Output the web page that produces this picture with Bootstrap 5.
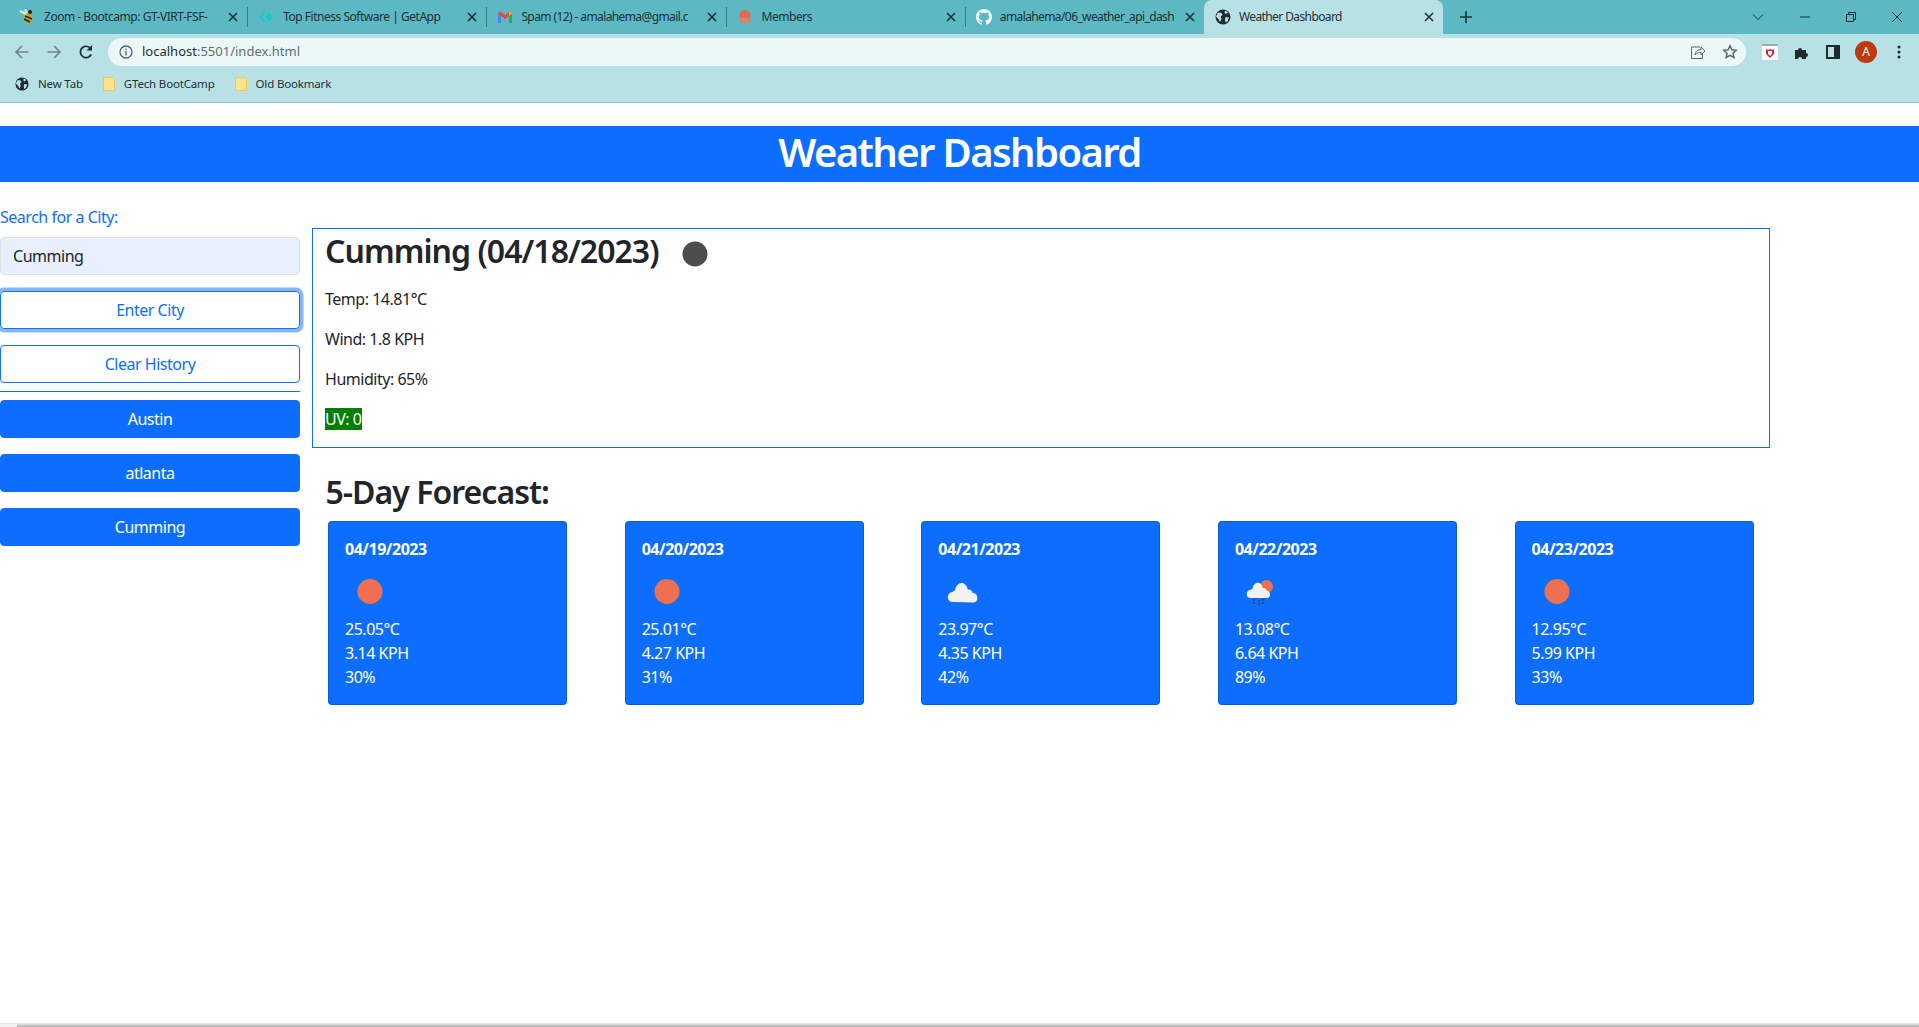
<!DOCTYPE html>
<html lang="en">
<head>
    <meta charset="UTF-8">
    <meta name="viewport" content="width=device-width, initial-scale=1.0">
    <title>Weather Dashboard</title>
    <link href="https://cdn.jsdelivr.net/npm/bootstrap@5.3.0/dist/css/bootstrap.min.css" rel="stylesheet">
    <script src="https://cdn.jsdelivr.net/npm/bootstrap@5.3.0/dist/js/bootstrap.bundle.min.js"></script>
    <style>
        html, body {
            height: 100%;
            overflow: hidden;
        }
        body {
            font-family: "Noto Sans", "Open Sans", sans-serif;
            color: #212529;
            letter-spacing: -.03em;
        }
        .btn, .form-control {
            letter-spacing: -.03em;
            border-radius: 4px;
        }
        /* browser window */
        .tab-strip {
            height: 34px;
            background-color: #5cb8c2;
            padding-left: 8px;
        }
        .tab-item {
            width: 239.2px;
            height: 34px;
            padding: 0 9px 0 11px;
            font-size: 12px;
            letter-spacing: -.04em;
            color: #1f3036;
            position: relative;
        }
        .tab-item + .tab-item::before {
            content: "";
            position: absolute;
            left: 0;
            top: 7px;
            height: 20px;
            border-left: 1px solid #3c7d85;
        }
        .tab-item.tab-on {
            background-color: #b8e1e6;
            border-radius: 8px 8px 0 0;
        }
        .tab-item.tab-on::before,
        .tab-on + .tab-item::before {
            display: none;
        }
        .tab-name {
            white-space: nowrap;
            overflow: hidden;
            flex: 1;
            margin-left: 9px;
        }
        .tab-tight {
            letter-spacing: -.05em;
            margin-left: 8px;
        }
        .tab-x {
            width: 10px;
            height: 10px;
            margin-left: 8px;
            flex: none;
        }
        .win-btns {
            margin-left: auto;
            gap: 36px;
            padding-right: 17px;
        }
        .tool-row {
            height: 32px;
            background-color: #b8e1e6;
            padding-top: 4px;
        }
        .nav-icons {
            width: 108px;
            height: 28px;
            padding-left: 14px;
            gap: 16px;
        }
        .url-bar {
            width: 1638px;
            height: 28px;
            background-color: #ecf7f8;
            border-radius: 14px;
            padding: 0 8px 0 11px;
            font-size: 13px;
            letter-spacing: 0;
            color: #5c6f73;
        }
        .url-bar b {
            font-weight: 400;
            color: #1f3036;
        }
        .url-text {
            margin-left: 9px;
        }
        .ext-icons {
            padding-left: 16px;
            gap: 16px;
        }
        .mark-row {
            height: 37px;
            background-color: #b8e1e6;
            border-bottom: 1px solid #9fbcc0;
            font-size: 11.5px;
            letter-spacing: -.015em;
            color: #1f3036;
            padding-left: 15px;
        }
        .mark-item {
            gap: 9px;
            margin-right: 20px;
        }
        .profile-dot {
            width: 22px;
            height: 22px;
            border-radius: 50%;
            background-color: #bf3a0d;
            color: #fff;
            font-size: 12px;
            line-height: 22px;
            text-align: center;
            letter-spacing: 0;
            margin: 0 4px 0 -1px;
        }
        /* page */
        .page-area {
            flex: 1;
            min-height: 0;
        }
        .dash-title {
            margin-top: 23px;
            font-size: 40px;
            font-weight: 600;
            line-height: 48px;
            letter-spacing: -.04em;
            padding: 2px 0 6px;
            margin-bottom: 0;
        }
        .side-col {
            width: 300px;
            padding-top: 23px;
            flex: none;
        }
        .city-label {
            margin-bottom: 8px;
            line-height: 24px;
        }
        .city-input, .city-input:focus {
            background-color: #e8f0fe;
        }
        .btn-ring {
            box-shadow: 0 0 0 3.5px #86b7fe;
        }
        .main-col {
            width: 1458px;
            margin-left: 12px;
            padding-top: 46px;
        }
        .today-box {
            border: 1px solid #0d6efd;
            padding: 0 12px;
            height: 220px;
        }
        .today-head {
            height: 50px;
            margin: 0 0 8px;
            padding-bottom: 6px;
            font-size: 32px;
            font-weight: 600;
            letter-spacing: -.03em;
        }
        .today-head svg {
            margin: 3px 0 0 11px;
        }
        .uv-chip {
            background-color: green;
            color: #fff;
        }
        .week-head {
            margin: 25px 0 10px 13.5px;
            font-size: 32px;
            font-weight: 600;
            line-height: 38px;
            letter-spacing: -.03em;
        }
        .week-row {
            padding: 0 16.4px 0 16px;
        }
        .day-card {
            --bs-card-border-radius: 4px;
            width: 239px;
            height: 184px;
        }
        .day-date {
            font-size: 16px;
            font-weight: 700;
            line-height: 19px;
            padding-top: 2px;
            margin-bottom: 7px;
        }
        .day-card svg {
            display: block;
            margin-bottom: 1px;
        }
        .scroll-strip {
            height: 4px;
            background-color: #f1f1f1;
            border-top: 1px solid #e4e4e4;
            flex: none;
        }
        .scroll-thumb {
            margin-left: 17px;
            height: 100%;
            background-color: #bdbdbd;
            border-top: 1px solid #dcdcdc;
        }
    </style>
</head>
<body class="d-flex flex-column">

    <svg width="0" height="0" class="d-none">
        <symbol id="ic-x" viewBox="0 0 10 10"><path d="M1 1l8 8M9 1l-8 8" stroke="#1f3036" stroke-width="1.6" fill="none"/></symbol>
        <symbol id="ic-globe" viewBox="0 0 16 16"><circle cx="8" cy="8" r="7.5" fill="#202b30"/><path d="M3 3.5l3.5.5 1 2-2 1.5 1 2.5-1.5 3-1.5-3-2.5-2.5zM10 1.5l3 2-2 1.5-1.5-1zM10.500 8l3.500.500-1.500 4-2 1-.500-3z" fill="#b8e1e6"/></symbol>
        <symbol id="ic-folder" viewBox="0 0 12 14"><path d="M.5.5h9l2 2v11H.5z" fill="#fde293" stroke="#f2c94c"/></symbol>
        <symbol id="ic-sun" viewBox="0 0 50 50"><ellipse cx="25" cy="25.500" rx="12.500" ry="12.500" fill="#ee7050"/></symbol>
    </svg>

    <div class="tab-strip d-flex flex-shrink-0">
        <div class="tab-item d-flex align-items-center">
            <svg width="16" height="16" viewBox="0 0 16 16"><ellipse cx="9" cy="9" rx="4" ry="6" fill="#c9a227" transform="rotate(-25 9 9)"/><path d="M6 7l7 3M5 10l6 3" stroke="#222" stroke-width="1.500"/><path d="M7 5L1 2M8 4L6 0" stroke="#e6edf0" stroke-width="2"/><circle cx="11" cy="3" r="2" fill="#222"/></svg>
            <span class="tab-name">Zoom - Bootcamp: GT-VIRT-FSF-</span>
            <svg class="tab-x"><use href="#ic-x"/></svg>
        </div>
        <div class="tab-item d-flex align-items-center">
            <svg width="16" height="16" viewBox="0 0 16 16"><path d="M1 8l4-5 3 0-4 5 4 5-3 0zM7 8l4-5 4 5-4 5z" fill="#22c5c9"/></svg>
            <span class="tab-name">Top Fitness Software | GetApp</span>
            <svg class="tab-x"><use href="#ic-x"/></svg>
        </div>
        <div class="tab-item d-flex align-items-center">
            <svg width="16" height="16" viewBox="0 0 16 16"><path d="M1 4v10h3V7z" fill="#4285f4"/><path d="M15 4v10h-3V7z" fill="#34a853"/><path d="M1 4l3 3 4 3 4-3 3-3-2-1.500L8 6 3 2.500z" fill="#ea4335"/><path d="M12 7l3-3-2-1.500-1 .8z" fill="#fbbc04"/></svg>
            <span class="tab-name tab-tight">Spam (12) - amalahema@gmail.c</span>
            <svg class="tab-x"><use href="#ic-x"/></svg>
        </div>
        <div class="tab-item d-flex align-items-center">
            <svg width="16" height="16" viewBox="0 0 16 16"><circle cx="8" cy="6.500" r="5.500" fill="#e8684a"/><path d="M3 9l-1 5 2-1 1 2 1.500-2 1.500 2 1.500-2 1.500 2 1-2 2 1-1-5z" fill="#d9826c"/></svg>
            <span class="tab-name">Members</span>
            <svg class="tab-x"><use href="#ic-x"/></svg>
        </div>
        <div class="tab-item d-flex align-items-center">
            <svg width="16" height="16" viewBox="0 0 16 16"><path fill="#fff" d="M8 0C3.580 0 0 3.580 0 8c0 3.540 2.290 6.530 5.470 7.590.4.070.55-.17.55-.38 0-.19-.01-.82-.01-1.490-2.010.37-2.530-.49-2.690-.94-.09-.23-.48-.94-.82-1.130-.28-.15-.68-.52-.01-.53.630-.01 1.080.58 1.230.82.720 1.210 1.870.870 2.330.66.070-.52.280-.87.510-1.070-1.780-.2-3.640-.89-3.640-3.950 0-.87.310-1.590.82-2.150-.08-.2-.36-1.020.08-2.120 0 0 .67-.21 2.200.82.640-.18 1.320-.27 2-.27s1.360.09 2 .27c1.530-1.040 2.200-.82 2.200-.82.440 1.100.16 1.920.08 2.120.51.56.82 1.270.82 2.150 0 3.070-1.870 3.750-3.650 3.950.29.250.54.730.54 1.480 0 1.070-.01 1.930-.01 2.200 0 .21.150.46.550.38A8.010 8.010 0 0 0 16 8c0-4.420-3.580-8-8-8z"/></svg>
            <span class="tab-name tab-tight">amalahema/06_weather_api_dash</span>
            <svg class="tab-x"><use href="#ic-x"/></svg>
        </div>
        <div class="tab-item tab-on d-flex align-items-center">
            <svg width="16" height="16"><use href="#ic-globe"/></svg>
            <span class="tab-name tab-tight">Weather Dashboard</span>
            <svg class="tab-x"><use href="#ic-x"/></svg>
        </div>
        <svg class="align-self-center ms-3" width="14" height="14" viewBox="0 0 14 14"><path d="M7 1v12M1 7h12" stroke="#1f3036" stroke-width="1.600"/></svg>
        <div class="win-btns d-flex align-items-center">
            <svg width="12" height="12" viewBox="0 0 12 12"><path d="M1 3.500l5 5 5-5" stroke="#1f3036" fill="none"/></svg>
            <svg width="10" height="10" viewBox="0 0 10 10"><path d="M0 5h10" stroke="#1f3036"/></svg>
            <svg width="10" height="10" viewBox="0 0 10 10"><path d="M.5 2.500h7v7h-7zM2.500 2.500v-2h7v7h-2" stroke="#1f3036" fill="none"/></svg>
            <svg width="10" height="10" viewBox="0 0 10 10"><path d="M0 0l10 10M10 0L0 10" stroke="#1f3036"/></svg>
        </div>
    </div>

    <div class="tool-row d-flex flex-shrink-0">
        <div class="nav-icons d-flex align-items-center">
            <svg width="16" height="16" viewBox="0 0 16 16"><path d="M14.500 8H2M8 2L2 8l6 6" stroke="#70868a" stroke-width="1.700" fill="none"/></svg>
            <svg width="16" height="16" viewBox="0 0 16 16"><path d="M1.500 8H14M8 2l6 6-6 6" stroke="#70868a" stroke-width="1.700" fill="none"/></svg>
            <svg width="16" height="16" viewBox="0 0 16 16"><path d="M13.200 10.500A5.700 5.700 0 1 1 12.500 4.300" stroke="#1f2a2e" stroke-width="1.700" fill="none"/><path d="M14 1v5.500H8.500z" fill="#1f2a2e"/></svg>
        </div>
        <div class="url-bar d-flex align-items-center">
            <svg width="14" height="14" viewBox="0 0 14 14"><circle cx="7" cy="7" r="6" stroke="#55666a" stroke-width="1.300" fill="none"/><path d="M7 6v4.500M7 3.500v1.300" stroke="#55666a" stroke-width="1.400"/></svg>
            <span class="url-text"><b>localhost</b>:5501/index.html</span>
            <div class="ms-auto d-flex align-items-center gap-3">
                <svg width="16" height="16" viewBox="0 0 16 16"><path d="M10 3H1.500v11.500h11V10" stroke="#55666a" fill="none"/><path d="M5 11c.500-4 3-5.500 6-5.500V3l4 4-4 4V8.500C8.500 8.500 6.500 9 5 11z" stroke="#55666a" fill="#ecf7f8"/></svg>
                <svg width="16" height="16" viewBox="0 0 16 16"><path d="M8 1.800l1.900 4 4.300.500-3.200 3 .9 4.300L8 11.400l-3.900 2.200.9-4.300-3.200-3 4.300-.500z" stroke="#55666a" stroke-width="1.500" fill="none"/></svg>
            </div>
        </div>
        <div class="ext-icons d-flex align-items-center">
            <svg width="16" height="16" viewBox="0 0 16 16"><rect width="16" height="16" fill="#fff"/><rect width="16" height="2" fill="#a8a8a8"/><path d="M4 5l2 1 2-1 2 1 2-1v5l-4 4-4-4z" fill="#d9202c"/><path d="M6 7h4v3l-2 2-2-2z" fill="#fff"/></svg>
            <svg width="16" height="16" viewBox="0 0 16 16"><path d="M1 6h3a2 2 0 1 1 4 0h4v3a2 2 0 1 1 0 4v2H8a2 2 0 1 0-4 0H1z" fill="#1f2a2e"/></svg>
            <svg width="14" height="14" viewBox="0 0 14 14"><path d="M1 1h12v12H1z" stroke="#1f2a2e" stroke-width="2" fill="none"/><path d="M8 1h5v12H8z" fill="#1f2a2e"/></svg>
            <span class="profile-dot">A</span>
            <svg width="4" height="14" viewBox="0 0 4 14"><circle cx="2" cy="2" r="1.500" fill="#1f2a2e"/><circle cx="2" cy="7" r="1.500" fill="#1f2a2e"/><circle cx="2" cy="12" r="1.500" fill="#1f2a2e"/></svg>
        </div>
    </div>

    <div class="mark-row d-flex align-items-center flex-shrink-0">
        <div class="mark-item d-flex align-items-center">
            <svg width="14" height="14"><use href="#ic-globe"/></svg>
            <span>New Tab</span>
        </div>
        <div class="mark-item d-flex align-items-center">
            <svg width="12" height="14"><use href="#ic-folder"/></svg>
            <span>GTech BootCamp</span>
        </div>
        <div class="mark-item d-flex align-items-center">
            <svg width="12" height="14"><use href="#ic-folder"/></svg>
            <span>Old Bookmark</span>
        </div>
    </div>

    <div class="page-area">
        <h1 class="dash-title bg-primary text-white text-center">Weather Dashboard</h1>
        <div class="d-flex">
            <div class="side-col">
                <label class="city-label form-label d-block text-primary" for="cityInput">Search for a City:</label>
                <input type="text" id="cityInput" class="city-input form-control mb-3" value="Cumming">
                <button class="btn btn-outline-primary btn-ring w-100 mb-3">Enter City</button>
                <button class="btn btn-outline-primary w-100">Clear History</button>
                <hr class="my-2 border-primary opacity-100">
                <button class="btn btn-primary w-100 mb-3">Austin</button>
                <button class="btn btn-primary w-100 mb-3">atlanta</button>
                <button class="btn btn-primary w-100">Cumming</button>
            </div>
            <div class="main-col">
                <div class="today-box">
                    <h2 class="today-head d-flex align-items-center">Cumming (04/18/2023)
                        <svg width="50" height="50" viewBox="0 0 50 50"><circle cx="25" cy="26" r="12.500" fill="#4d4d4d"/></svg>
                    </h2>
                    <p>Temp: 14.81°C</p>
                    <p>Wind: 1.8 KPH</p>
                    <p>Humidity: 65%</p>
                    <p class="mb-0"><span class="uv-chip">UV: 0</span></p>
                </div>
                <h2 class="week-head">5-Day Forecast:</h2>
                <div class="week-row d-flex justify-content-between">
                    <div class="day-card card text-bg-primary">
                        <div class="card-body">
                            <h6 class="day-date">04/19/2023</h6>
                            <svg width="50" height="50"><use href="#ic-sun"/></svg>
                            <div>25.05°C</div>
                            <div>3.14 KPH</div>
                            <div>30%</div>
                        </div>
                    </div>
                    <div class="day-card card text-bg-primary">
                        <div class="card-body">
                            <h6 class="day-date">04/20/2023</h6>
                            <svg width="50" height="50"><use href="#ic-sun"/></svg>
                            <div>25.01°C</div>
                            <div>4.27 KPH</div>
                            <div>31%</div>
                        </div>
                    </div>
                    <div class="day-card card text-bg-primary">
                        <div class="card-body">
                            <h6 class="day-date">04/21/2023</h6>
                            <svg width="50" height="50" viewBox="0 0 50 50"><path d="M15 36a5 5 0 0 1-.5-10 5 5 0 0 1 2.500-1.500c.5-4.500 3.500-7.500 6.500-7.500s5.500 2.500 6.200 6.500a4.500 4.500 0 0 1 5 3.500 4.800 4.800 0 0 1 .8 9.500z" fill="#f2f2f2"/></svg>
                            <div>23.97°C</div>
                            <div>4.35 KPH</div>
                            <div>42%</div>
                        </div>
                    </div>
                    <div class="day-card card text-bg-primary">
                        <div class="card-body">
                            <h6 class="day-date">04/22/2023</h6>
                            <svg width="50" height="50" viewBox="0 0 50 50"><circle cx="31.500" cy="20.500" r="6.500" fill="#ee7050"/><path d="M16 32a4 4 0 0 1-.5-8 4 4 0 0 1 2-1.200c.5-3.500 2.800-6 5.300-6s4.400 2 5 5.200a3.600 3.600 0 0 1 4 2.800 3.700 3.700 0 0 1 .6 7.200z" fill="#f2f2f2"/><path d="M19 33v5M24 34v5M28 33v5" stroke="#3a3a3a" stroke-width="1.200" stroke-dasharray="2 1"/></svg>
                            <div>13.08°C</div>
                            <div>6.64 KPH</div>
                            <div>89%</div>
                        </div>
                    </div>
                    <div class="day-card card text-bg-primary">
                        <div class="card-body">
                            <h6 class="day-date">04/23/2023</h6>
                            <svg width="50" height="50"><use href="#ic-sun"/></svg>
                            <div>12.95°C</div>
                            <div>5.99 KPH</div>
                            <div>33%</div>
                        </div>
                    </div>
                </div>
            </div>
        </div>
    </div>

    <div class="scroll-strip"><div class="scroll-thumb"></div></div>

</body>
</html>
